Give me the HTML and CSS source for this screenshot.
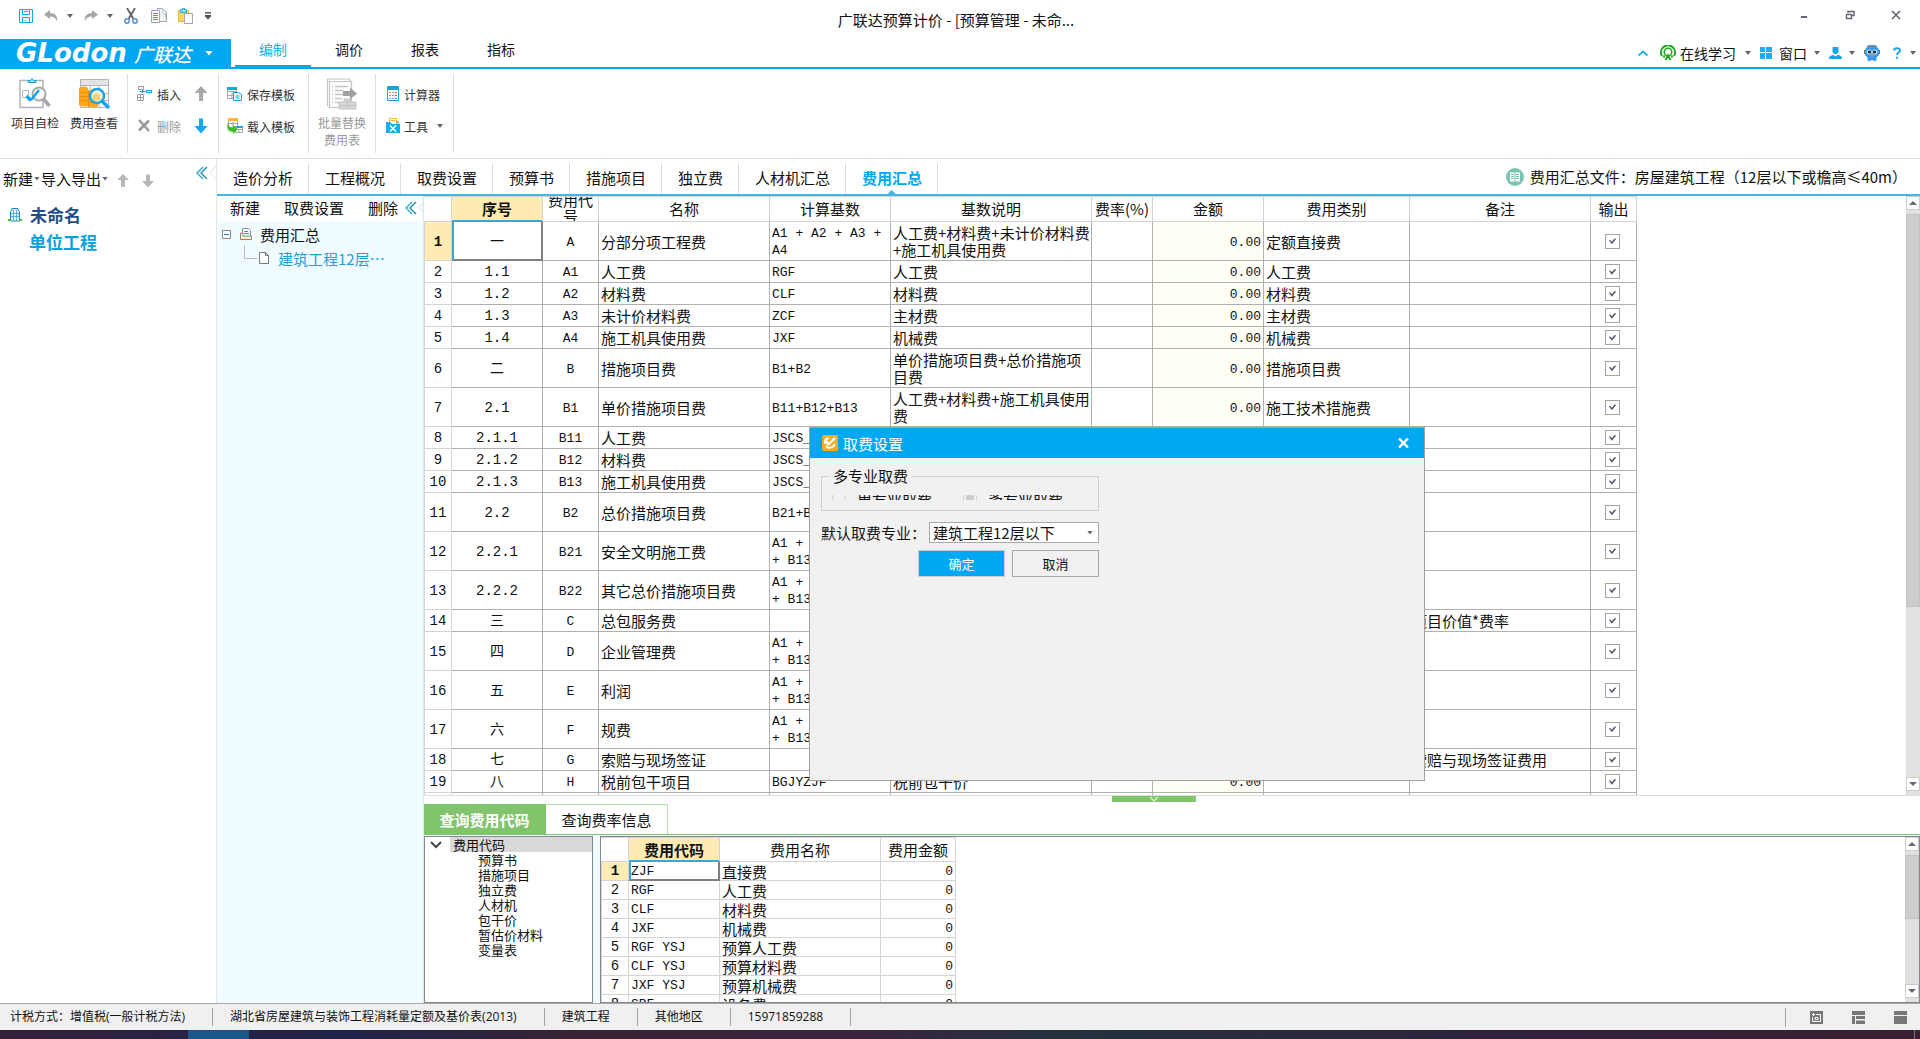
FILE: index.html
```html
<!DOCTYPE html>
<html lang="zh-CN">
<head>
<meta charset="utf-8">
<title>广联达预算计价</title>
<link rel="stylesheet" href="styles.css">
</head>
<body>
<header class="titlebar">
  <div class="quick">
    <button class="ico" aria-label="保存"><svg width="14" height="14" viewBox="0 0 14 14" fill="none" stroke="#10a8e8"><path d="M.5.5h13v13H.5z"/><path d="M3.500.5v5h7v-5M5 2.500h4M3.500 13.500v-5h7v5"/><path d="M6 11.500h1" stroke="#888"/></svg></button>
    <button class="ico undo" aria-label="撤销"><svg width="14" height="12" viewBox="0 0 14 12"><path d="M0 4.500 6 0v3c5 0 8 3 7 8.500C12 8 10 6.500 6 6.500V9z" fill="#a6a6a6"/></svg><i class="caret"></i></button>
    <button class="ico redo" aria-label="恢复"><svg width="14" height="12" viewBox="0 0 14 12"><path d="M14 4.500 8 0v3C3 3 0 6 1 11.500 2 8 4 6.500 8 6.500V9z" fill="#a6a6a6"/></svg><i class="caret"></i></button>
    <button class="ico" aria-label="剪切"><svg width="14" height="16" viewBox="0 0 14 16" fill="none"><path d="M3 0 9.500 11M11 0 4.500 11" stroke="#606060" stroke-width="1.800"/><circle cx="3" cy="13" r="2.200" stroke="#5b8fc8" stroke-width="1.500"/><circle cx="11" cy="13" r="2.200" stroke="#5b8fc8" stroke-width="1.500"/></svg></button>
    <button class="ico copy" aria-label="复制"><svg width="16" height="16" viewBox="0 0 16 16" fill="#fff" stroke="#a6a6a6"><path d="M6.500.5h5l4 4v9h-9z" fill="#f2f2f2"/><path d="M11 1v4h4v6z" fill="#9bdcf8" stroke="none"/><path d="M.5 2.500h8v12h-8z"/><path d="M2 5.500h5M2 7.500h5M2 9.500h5M2 11.500h5" stroke="#1badea"/></svg></button>
    <button class="ico" aria-label="粘贴"><svg width="16" height="16" viewBox="0 0 16 16"><path d="M.5 2.500h10v11H.5z" fill="#ffd45c" stroke="#e8b83a"/><path d="M2.500 1.500h2V0h2v1.500h2v3h-6z" fill="#8fe0fa" stroke="#1badea"/><path d="M6.500 5.500h8v10h-8z" fill="#fff" stroke="#a6a6a6"/></svg></button>
    <button class="ico" aria-label="自定义"><svg width="6" height="8" viewBox="0 0 6 8" fill="#555"><path d="M0 0h6v1.500H0zM0 3h6v1.500L3 7.500 0 4.500z"/></svg></button>
  </div>
  <h1 class="apptitle">广联达预算计价 - [预算管理 - 未命...</h1>
  <div class="winbtns">
    <button class="ico" aria-label="最小化"><svg width="10" height="10" viewBox="0 0 10 10"><path d="M2 6h6v2H2z" fill="#667"/></svg></button>
    <button class="ico" aria-label="还原"><svg width="10" height="10" viewBox="0 0 10 10" fill="none" stroke="#667"><path d="M3 3V1.500h6v4H7M1.500 4.500h5v4h-5z" stroke-width="1.400"/></svg></button>
    <button class="ico" aria-label="关闭"><svg width="10" height="10" viewBox="0 0 10 10"><path d="m1 1 8 8M9 1 1 9" stroke="#667" stroke-width="1.600"/></svg></button>
  </div>
</header>

<nav class="menubar">
  <button class="logo"><b>GLodon</b><span>广联达</span><i class="caret light"></i></button>
  <div class="menus"><a class="menu on" href="#">编制</a><a class="menu" href="#">调价</a><a class="menu" href="#">报表</a><a class="menu" href="#">指标</a></div>
  <div class="tools">
    <button class="ico up" aria-label="收起"><svg width="10" height="6" viewBox="0 0 10 6"><path d="m.5 5.500 4.500-4 4.500 4" fill="none" stroke="#1badea" stroke-width="1.800"/></svg></button>
    <button class="ico learn"><svg width="16" height="16" viewBox="0 0 16 16" fill="none" stroke="#1ea81e"><path d="M2 11A7 7 0 1 1 14 11" stroke-width="2"/><circle cx="8" cy="7" r="3.800" stroke-width="1.500"/><path d="M3 11.500h2M11 11.500h2M5.500 15 8 10.500 10.500 15" stroke-width="2"/></svg>在线学习<i class="caret"></i></button>
    <button class="ico wins"><svg width="12" height="12" viewBox="0 0 12 12" fill="#1badf2"><path d="M0 0h5v5H0zM6 0h6v5H6zM0 6h5v6H0zM6 6h6v6H6z"/></svg>窗口<i class="caret"></i></button>
    <button class="ico" aria-label="用户"><svg width="13" height="12" viewBox="0 0 13 12" fill="#10a5ee"><path d="M3.500 0h6v5L8 7H5L3.500 5zM0 12c0-3 2-4 4.500-4L6.500 9.500 8.500 8c2.500 0 4.500 1 4.500 4z"/></svg><i class="caret"></i></button>
    <button class="ico" aria-label="助手"><svg width="16" height="16" viewBox="0 0 16 16"><path d="M1 5C3-1 13-1 15 5v5l-2 2-1 4h-2l-2-1-2 1H4l-1-4-2-2z" fill="#3a9bee"/><path d="M3 2c3-2 7-2 10 0" stroke="#888" stroke-width="1.500" fill="none"/><circle cx="5.200" cy="7" r="2.600" fill="#b9dcf8"/><circle cx="10.800" cy="7" r="2.600" fill="#b9dcf8"/><circle cx="5.500" cy="7" r="1.500" fill="#222"/><circle cx="10.500" cy="7" r="1.500" fill="#222"/><path d="M7 9.500h2L8 12z" fill="#f5a623"/><path d="M.5 5v4M15.500 5v4" stroke="#777"/></svg></button>
    <button class="ico help" aria-label="帮助"><svg width="8" height="12" viewBox="0 0 8 12"><path d="M1 3.500C1 .5 7 .5 7 3.300 7 5.500 4 5.500 4 8M4 9.800v2" fill="none" stroke="#10a5ee" stroke-width="1.900"/></svg><i class="caret"></i></button>
  </div>
</nav>

<section class="ribbon">
  <div class="group big">
    <button class="bigbtn"><svg width="32" height="32" viewBox="0 0 32 32" fill="none"><path d="M1 2.500h23v27H1z" fill="#fff" stroke="#b4b4b4" stroke-width="1.500"/><path d="M9 4.500V2.500h2.500L13 .5l1.500 2H17v2z" fill="#8fe0fa" stroke="#12a5dc"/><path d="M3.500 12.500h6v7h-6z" stroke="#b4b4b4"/><circle cx="20" cy="16" r="6.500" fill="#f8fbfd" stroke="#a8a8a8" stroke-width="2"/><path d="m24.500 21 6 7" stroke="#a8a8a8" stroke-width="3.500"/><path d="m7.500 18 4.500 4.500" stroke="#12a5ee" stroke-width="3.500"/><path d="M12 22 20 12" stroke="#12a5ee" stroke-width="2.500"/></svg>项目自检</button>
    <button class="bigbtn"><svg width="32" height="32" viewBox="0 0 32 32" fill="none"><path d="M2.500 1.500h28v28h-28z" fill="#fff" stroke="#b4b4b4"/><path d="M3 2h27v5H3z" fill="#e4e4e4"/><path d="M3 7.500h27M3 15.500h27M3 22.500h27M12 8v21M21 8v21" stroke="#b4b4b4"/><path d="M1 10c2-2 7-2 9 0v3c2-1 8-1 10 1v14c-2 2-7 2-9 0-2 1-8 1-10-1z" fill="#ffa71c"/><path d="M1 14c2 1 7 1 9 0M1 18c2 1 7 1 9 0M1 22c2 1 7 1 9 0M11 19c2 1 7 1 9 0M11 24c2 1 7 1 9 0M10.500 12v17" stroke="#e89000"/><circle cx="19" cy="18" r="7" fill="#fff3d0" stroke="#12a5ee" stroke-width="2.500"/><path d="M15 17c2-2 6-2 7 0v5c-2 1-5 1-7 0z" fill="#ffcf78"/><path d="m24 23 7 7" stroke="#12a5ee" stroke-width="3.500"/></svg>费用查看</button>
  </div>
  <div class="group ins">
    <button class="small"><svg width="16" height="16" viewBox="0 0 16 16" fill="none" stroke="#9a9a9a"><path d="M1.500.5h5v3h-5zM.5 8.500h6v6h-6zM3.500 8.500v6M.5 11.500h6"/><path d="M2.500 5.500h6M5.500 4v3M9.500 4.500h5v2h-5z" stroke="#12a5dc" stroke-width="1.200"/></svg>插入</button>
    <button class="ico" aria-label="上移"><svg width="14" height="16" viewBox="0 0 14 16"><path d="M7 0 .5 7H5v8h4V7h4.500z" fill="#a8a8a8"/></svg></button>
    <button class="small off"><svg width="16" height="16" viewBox="0 0 16 16"><path d="m2 2 10 11M12 2.500 2 12.500" stroke="#999" stroke-width="2.600"/></svg>删除</button>
    <button class="ico" aria-label="下移"><svg width="14" height="16" viewBox="0 0 14 16"><path d="M7 15.500.5 8H5V.5h4V8h4.500z" fill="#12a9f2"/></svg></button>
  </div>
  <div class="group tpl">
    <button class="small"><svg width="16" height="16" viewBox="0 0 16 16" fill="#fff"><path d="M.5 1.500h9v11h-9zM.5 5.500h9M.5 9.500h9M5 5v7" stroke="#b0a8a0"/><path d="M0 1h10v3H0z" fill="#16a6d8"/><path d="M6.500 6.500h5l3 2v6h-8z" stroke="#12a5dc"/><path d="M8.500 10h4M8.500 12h4" stroke="#12a5dc"/></svg>保存模板</button>
    <button class="small"><svg width="16" height="16" viewBox="0 0 16 16" fill="#fff"><path d="M1.500 1.500h9v8h-9zM1.500 5.500h9M6 4v5M8.500 8.500h7v6h-7zM8.500 11.500h7M12 11v3" stroke="#a8a8a8"/><path d="M1 0h10v3H1z" fill="#ffb62e"/><path d="M9 8h7v2H9z" fill="#16a6d8"/><path d="M1 5c-2 5 0 9 5 9v2l5-5-5-4v3C3 10 2 8 1 5z" fill="#3fbf2a"/></svg>载入模板</button>
  </div>
  <div class="group rep">
    <button class="bigbtn off"><svg width="32" height="32" viewBox="0 0 32 32" fill="none" stroke="#c4c4c4"><path d="M1.500 28V1H24v2M3.500 3.500h22v26h-22z" stroke-width="1.200"/><path d="M6 8.500h1M6 12.500h1M6 16.500h1M6 20.500h1M6 24.500h1M9 8.500h13M9 12.500h8M9 16.500h8M9 20.500h7M9 24.500h4" stroke-width="1.300"/><path d="M17 13h7V9.500l7 6-7 6V18h-7z" fill="#a0a0a0" stroke="none"/><path d="M18 21h7v3h5v7H13v-7h5z" fill="#d4d4d4"/><path d="M13 27.500h17M21.500 24v7M18 23.500h7"/></svg>批量替换<br>费用表</button>
  </div>
  <div class="group calc">
    <button class="small"><svg width="14" height="16" viewBox="0 0 14 16" fill="none"><path d="M1.500.5h11v14h-11z" fill="#fff" stroke="#12a5dc"/><path d="M2 1h10v3H2z" fill="#16a6d8"/><path d="M3 6.500h2M6 6.500h2M3 9.500h2M6 9.500h2M3 12.500h2M6 12.500h2" stroke="#999"/><path d="M9 6.500h2M9 9.500h2" stroke="#e2564c"/><path d="M9 12.500h2" stroke="#12a5dc"/></svg>计算器</button>
    <button class="small"><svg width="14" height="16" viewBox="0 0 14 16"><path d="M3.500.5h7v7h-7z" fill="#fff" stroke="#ffb62e"/><path d="M11 3h2v4h-2z" fill="#bbb"/><path d="M4.500 2.500h5" stroke="#ffb62e"/><path d="M0 4h4l2 2h8v9H0z" fill="#1badea"/><path d="m4 7.500 6 6M10 7.500l-6 6" stroke="#fff" stroke-width="1.500"/></svg>工具<i class="caret"></i></button>
  </div>
</section>

<main class="work">
  <aside class="project">
    <div class="ptools">
      <button class="txt">新建</button><i class="caret"></i><button class="txt">导入导出</button><i class="caret"></i>
      <svg class="pa" width="12" height="14" viewBox="0 0 12 14"><path d="M6 0 0 6h4v7h4V6h4z" fill="#b8b8b8"/></svg>
      <svg class="pa" width="12" height="14" viewBox="0 0 12 14"><path d="M6 13.500 0 7h4V.5h4V7h4z" fill="#b8b8b8"/></svg>
      <button class="ico fold" aria-label="折叠"><svg width="20" height="16" viewBox="0 0 20 16" fill="none"><path d="M7 2 1 8l6 6" stroke="#2aa5cc" stroke-width="1.300"/><path d="M11 2 5 8l6 6" stroke="#1588a8" stroke-width="1.300"/><path d="M20 2 13.500 7.500 20 14" stroke="#ddd"/></svg></button>
    </div>
    <a class="proj root" href="#"><svg width="14" height="14" viewBox="0 0 14 14"><path d="M2.500 13V3.500L4 2V.5h6V2l1.500 1.500V13z" fill="#dff3fc" stroke="#1c86c0"/><path d="M5.500 2v11M8.500 2v11M3 5.500h8M3 8.500h8" stroke="#5ab4e0"/><path d="M0 11h3v2H0zM11 11h3v2h-3z" fill="#4cb848"/></svg>未命名</a>
    <a class="proj unit" href="#">单位工程</a>
  </aside>

  <section class="desk">
    <nav class="tabs">
      <a href="#">造价分析</a><a href="#">工程概况</a><a href="#">取费设置</a><a href="#">预算书</a><a href="#">措施项目</a><a href="#">独立费</a><a href="#">人材机汇总</a><a href="#" class="on">费用汇总</a>
      <p class="file"><svg width="18" height="18" viewBox="0 0 18 18"><circle cx="9" cy="9" r="9" fill="#7cc4b4"/><path d="M4 4.500h4.500v9H4zM9.500 4.500H14v9H9.500z" fill="#fff"/><path d="M5 6.500h3M5 8.500h3M5 10.500h3M10 6.500h3M10 8.500h3M10 10.500h3" stroke="#7cc4b4"/></svg>费用汇总文件：房屋建筑工程（12层以下或檐高≤40m）</p>
    </nav>
    <div class="cols">
      <aside class="tree">
        <div class="ttools"><button class="txt">新建</button><button class="txt">取费设置</button><button class="txt">删除</button>
          <button class="ico" aria-label="折叠"><svg width="20" height="16" viewBox="0 0 20 16" fill="none"><path d="M7 2 1 8l6 6" stroke="#2aa5cc" stroke-width="1.300"/><path d="M11 2 5 8l6 6" stroke="#1588a8" stroke-width="1.300"/><path d="M20 2 13.500 7.500 20 14" stroke="#ddd"/></svg></button></div>
        <div class="node"><svg width="9" height="9" viewBox="0 0 9 9"><path d="M.5.5h8v8h-8z" fill="#fff" stroke="#888"/><path d="M2 4.500h5" stroke="#2a7fb0"/></svg><svg width="12" height="12" viewBox="0 0 12 12"><path d="M2.500.5h6l2 2v7h-8z" fill="#fff" stroke="#888"/><path d="M4 3.500h4M4 5.500h5" stroke="#12a5dc"/><path d="M.5 5v6.500h11V8H3V5z" fill="#fff0bf" stroke="#888"/></svg>费用汇总</div>
        <a class="node leaf" href="#"><svg width="26" height="26" viewBox="0 0 26 26" fill="none"><path d="M.5 0v13.500H13" stroke="#bbb"/><path d="M15.500 7.500h6l3 3v8h-9z" fill="#fff" stroke="#777"/><path d="M21.500 7.500v3h3" stroke="#777"/></svg>建筑工程12层⋯</a>
      </aside>
      <div class="right">
        <div class="sheet">
          <div class="pane">
          <table class="grid main">
            <colgroup><col class="c0"><col class="c1"><col class="c2"><col class="c3"><col class="c4"><col class="c5"><col class="c6"><col class="c7"><col class="c8"><col class="c9"><col class="c10"></colgroup>
            <thead><tr><th></th><th class="cur">序号</th><th><div class="clip">费用代号</div></th><th>名称</th><th>计算基数</th><th>基数说明</th><th>费率(%)</th><th>金额</th><th>费用类别</th><th>备注</th><th>输出</th></tr></thead>
            <tbody>
            <tr class="t cur"><th>1</th><td class="sel">一</td><td>A</td><td>分部分项工程费</td><td>A1 + A2 + A3 + A4</td><td>人工费+材料费+未计价材料费+施工机具使用费</td><td></td><td>0.00</td><td>定额直接费</td><td></td><td><input type="checkbox" checked aria-label="输出 1"></td></tr>
            <tr><th>2</th><td>1.1</td><td>A1</td><td>人工费</td><td>RGF</td><td>人工费</td><td></td><td>0.00</td><td>人工费</td><td></td><td><input type="checkbox" checked aria-label="输出 2"></td></tr>
            <tr><th>3</th><td>1.2</td><td>A2</td><td>材料费</td><td>CLF</td><td>材料费</td><td></td><td>0.00</td><td>材料费</td><td></td><td><input type="checkbox" checked aria-label="输出 3"></td></tr>
            <tr><th>4</th><td>1.3</td><td>A3</td><td>未计价材料费</td><td>ZCF</td><td>主材费</td><td></td><td>0.00</td><td>主材费</td><td></td><td><input type="checkbox" checked aria-label="输出 4"></td></tr>
            <tr><th>5</th><td>1.4</td><td>A4</td><td>施工机具使用费</td><td>JXF</td><td>机械费</td><td></td><td>0.00</td><td>机械费</td><td></td><td><input type="checkbox" checked aria-label="输出 5"></td></tr>
            <tr class="t"><th>6</th><td>二</td><td>B</td><td>措施项目费</td><td>B1+B2</td><td>单价措施项目费+总价措施项目费</td><td></td><td>0.00</td><td>措施项目费</td><td></td><td><input type="checkbox" checked aria-label="输出 6"></td></tr>
            <tr class="t"><th>7</th><td>2.1</td><td>B1</td><td>单价措施项目费</td><td>B11+B12+B13</td><td>人工费+材料费+施工机具使用费</td><td></td><td>0.00</td><td>施工技术措施费</td><td></td><td><input type="checkbox" checked aria-label="输出 7"></td></tr>
            <tr><th>8</th><td>2.1.1</td><td>B11</td><td>人工费</td><td>JSCS_RGF</td><td></td><td></td><td></td><td></td><td></td><td><input type="checkbox" checked aria-label="输出 8"></td></tr>
            <tr><th>9</th><td>2.1.2</td><td>B12</td><td>材料费</td><td>JSCS_CLF</td><td></td><td></td><td></td><td></td><td></td><td><input type="checkbox" checked aria-label="输出 9"></td></tr>
            <tr><th>10</th><td>2.1.3</td><td>B13</td><td>施工机具使用费</td><td>JSCS_JXF</td><td></td><td></td><td></td><td></td><td></td><td><input type="checkbox" checked aria-label="输出 10"></td></tr>
            <tr class="t"><th>11</th><td>2.2</td><td>B2</td><td>总价措施项目费</td><td>B21+B22</td><td></td><td></td><td></td><td></td><td></td><td><input type="checkbox" checked aria-label="输出 11"></td></tr>
            <tr class="t"><th>12</th><td>2.2.1</td><td>B21</td><td>安全文明施工费</td><td>A1 + A4 + B11<br>+ B13</td><td></td><td></td><td></td><td></td><td></td><td><input type="checkbox" checked aria-label="输出 12"></td></tr>
            <tr class="t"><th>13</th><td>2.2.2</td><td>B22</td><td>其它总价措施项目费</td><td>A1 + A4 + B11<br>+ B13</td><td></td><td></td><td></td><td></td><td></td><td><input type="checkbox" checked aria-label="输出 13"></td></tr>
            <tr><th>14</th><td>三</td><td>C</td><td>总包服务费</td><td></td><td></td><td></td><td></td><td></td><td>项目价值*费率</td><td><input type="checkbox" checked aria-label="输出 14"></td></tr>
            <tr class="t"><th>15</th><td>四</td><td>D</td><td>企业管理费</td><td>A1 + A4 + B11<br>+ B13</td><td></td><td></td><td></td><td></td><td></td><td><input type="checkbox" checked aria-label="输出 15"></td></tr>
            <tr class="t"><th>16</th><td>五</td><td>E</td><td>利润</td><td>A1 + A4 + B11<br>+ B13</td><td></td><td></td><td></td><td></td><td></td><td><input type="checkbox" checked aria-label="输出 16"></td></tr>
            <tr class="t"><th>17</th><td>六</td><td>F</td><td>规费</td><td>A1 + A4 + B11<br>+ B13</td><td></td><td></td><td></td><td></td><td></td><td><input type="checkbox" checked aria-label="输出 17"></td></tr>
            <tr><th>18</th><td>七</td><td>G</td><td>索赔与现场签证</td><td></td><td></td><td></td><td></td><td></td><td>索赔与现场签证费用</td><td><input type="checkbox" checked aria-label="输出 18"></td></tr>
            <tr><th>19</th><td>八</td><td>H</td><td>税前包干项目</td><td>BGJYZJF</td><td>税前包干价</td><td></td><td>0.00</td><td></td><td></td><td><input type="checkbox" checked aria-label="输出 19"></td></tr>
            <tr><th></th><td></td><td></td><td></td><td></td><td></td><td></td><td></td><td></td><td></td><td></td></tr>
            </tbody>
          </table>
          </div>
          <div class="scroll"><i class="up"></i><b class="long"></b><i class="down"></i></div>
        </div>
        <div class="split"><button class="handle" aria-label="收起下方面板"><svg width="10" height="6" viewBox="0 0 10 6"><path d="m1 1 4 4 4-4" fill="none" stroke="#d8f0cc" stroke-width="1.500"/></svg></button></div>
        <nav class="subtabs"><a href="#" class="on">查询费用代码</a><a href="#">查询费率信息</a></nav>
        <div class="query">
          <ul class="codes">
            <li class="top"><svg width="12" height="8" viewBox="0 0 12 8"><path d="m1 1 5 5 5-5" fill="none" stroke="#444" stroke-width="2"/></svg><span>费用代码</span></li>
            <li>预算书</li><li>措施项目</li><li>独立费</li><li>人材机</li><li>包干价</li><li>暂估价材料</li><li>变量表</li>
          </ul>
          <div class="result">
            <div class="pane">
            <table class="grid sub">
              <colgroup><col class="d0"><col class="d1"><col class="d2"><col class="d3"></colgroup>
              <thead><tr><th></th><th class="cur">费用代码</th><th>费用名称</th><th>费用金额</th></tr></thead>
              <tbody>
              <tr class="cur"><th>1</th><td class="sel">ZJF</td><td>直接费</td><td>0</td></tr>
              <tr><th>2</th><td>RGF</td><td>人工费</td><td>0</td></tr>
              <tr><th>3</th><td>CLF</td><td>材料费</td><td>0</td></tr>
              <tr><th>4</th><td>JXF</td><td>机械费</td><td>0</td></tr>
              <tr><th>5</th><td>RGF YSJ</td><td>预算人工费</td><td>0</td></tr>
              <tr><th>6</th><td>CLF YSJ</td><td>预算材料费</td><td>0</td></tr>
              <tr><th>7</th><td>JXF YSJ</td><td>预算机械费</td><td>0</td></tr>
              <tr><th>8</th><td>SBF</td><td>设备费</td><td>0</td></tr>
              </tbody>
            </table>
            </div>
            <div class="scroll"><i class="up"></i><b class="short"></b><i class="down"></i></div>
          </div>
        </div>
      </div>
    </div>
  </section>
</main>

<footer class="status">
  <span>计税方式：增值税(一般计税方法)</span><span>湖北省房屋建筑与装饰工程消耗量定额及基价表(2013)</span><span>建筑工程</span><span>其他地区</span><span>15971859288</span>
  <div class="views">
    <button class="ico" aria-label="适应"><svg width="13" height="13" viewBox="0 0 13 13"><path d="M0 0h13v13H0z" fill="#777"/><path d="M2 3.500h3M3.500 2v3M6 3.500h4.500v7h-8V6M5 6.500h3v2H5z" fill="none" stroke="#fff"/></svg></button>
    <button class="ico" aria-label="列表"><svg width="13" height="13" viewBox="0 0 13 13" fill="#777"><path d="M0 0h13v4H0zM0 5h3v8H0zM4 5h9v3H4zM4 9.500h9V13H4z"/></svg></button>
    <button class="ico" aria-label="窗格"><svg width="13" height="13" viewBox="0 0 13 13" fill="#777"><path d="M0 0h13v4H0zM0 5h13v8H0z"/></svg></button>
  </div>
</footer>
<div class="taskbar"><i class="running"></i><i class="edge"></i></div>

<div class="dialog" role="dialog" aria-labelledby="dlg">
  <header class="dhead"><svg width="16" height="16" viewBox="0 0 16 16"><rect width="16" height="16" rx="2" fill="#f9ac1b"/><path d="M7 3.500C3 3 2 7 4 9M4 11c2 3 7 2 9-2" stroke="#fff" stroke-width="2" fill="none"/><path d="m6 10 7-7M4 6l3 4" stroke="#fff" stroke-width="2.400"/></svg><h2 id="dlg">取费设置</h2><button class="ico" aria-label="关闭"><svg width="11" height="10" viewBox="0 0 11 10"><path d="m1 .5 9 9M10 .5l-9 9" stroke="#fff" stroke-width="2.400"/></svg></button></header>
  <form class="dbody">
    <fieldset><legend>多专业取费</legend>
      <div class="radios"><label><input type="radio" name="m" disabled>单专业取费</label><label><input type="radio" name="m" checked disabled>多专业取费</label></div>
    </fieldset>
    <div class="line"><label for="major">默认取费专业：</label><div class="pick"><select id="major"><option>建筑工程12层以下</option></select><i class="caret"></i></div></div>
    <div class="acts"><button type="button" class="ok">确定</button><button type="button">取消</button></div>
  </form>
</div>
</body>
</html>
```
FILE: styles.css
```css
* { box-sizing: border-box; }
body {
  margin: 0; height: 100vh; display: flex; flex-direction: column; overflow: hidden; position: relative;
  background: #fff; color: #111; font: 15px/17px "Noto Sans CJK SC", sans-serif;
}
button { border: 0; padding: 0; background: none; font: inherit; color: inherit; }
a { color: inherit; text-decoration: none; }
h1, h2, p, ul { margin: 0; padding: 0; font-size: 15px; font-weight: 400; list-style: none; }
svg { display: block; flex: none; }
.ico { display: flex; align-items: center; gap: 9px; }
.caret { flex: none; width: 6px; height: 4px; background: #666; clip-path: polygon(0 0, 100% 0, 50% 100%); }
.caret.light { width: 8px; height: 5px; background: #fff; }

.titlebar { height: 39px; flex: none; display: grid; grid-template-columns: 1fr auto 1fr; align-items: center; padding: 0 19px; }
.quick { display: flex; align-items: center; gap: 11px; height: 32px; align-self: start; }
.quick .copy { margin-left: 2px; }
.apptitle { padding-right: 8px; }
.winbtns { display: flex; justify-content: flex-end; gap: 36px; align-self: start; padding-top: 10px; }

.menubar { height: 30px; flex: none; display: flex; border-bottom: 2px solid #00a8f0; }
.logo { width: 231px; background: #00a8f3; color: #fff; display: flex; align-items: center; padding-left: 16px; }
.logo b { font: italic 700 26px/28px "DejaVu Sans", sans-serif; width: 118px; text-align: left; }
.logo span { font-size: 19px; font-style: italic; font-weight: 500; width: 71px; text-align: left; }
.menus { display: flex; padding-left: 4px; font-size: 14px; height: 30px; }
.menu { width: 76px; text-align: center; line-height: 20px; border-bottom: 4px solid transparent; }
.menu.on { color: #1badf2; border-bottom-color: #00a8f0; }
.tools { margin-left: auto; display: flex; align-items: center; gap: 9px; padding-right: 4px; font-size: 14px; }
.tools .ico { gap: 7px; }
.tools .up { margin-right: 3px; }
.tools .learn { gap: 4px; }
.tools .learn .caret { margin-left: 5px; }
.tools .help { gap: 9px; margin-left: 4px; }

.ribbon { height: 90px; flex: none; display: flex; padding: 5px 0; border-bottom: 1px solid #ddd; font-size: 12px; color: #333; }
.group { border-right: 1px solid #ddd; height: 79px; display: flex; }
.big { width: 128px; padding: 4px 0 0 11px; gap: 11px; }
.bigbtn { width: 48px; align-self: flex-start; white-space: nowrap; }
.bigbtn svg { margin: 0 auto 4px; }
.off { color: #999; }
.small { display: flex; align-items: center; gap: 4px; }
.ins { width: 91px; display: grid; grid-template-columns: 44px 14px; column-gap: 13px; padding-left: 9px; }
.ins, .tpl, .calc { padding-top: 4px; padding-bottom: 11px; grid-template-rows: 1fr 1fr; }
.tpl { width: 90px; display: grid; padding-left: 8px; }
.rep { width: 67px; padding: 4px 0 0 9px; }
.calc { width: 78px; display: grid; padding-left: 10px; }
.calc .caret { margin-left: 5px; }

.work { flex: 1; min-height: 0; display: grid; grid-template-columns: 217px 1fr; }
.project { border-right: 1px solid #e4e4e4; }
.ptools { height: 37px; display: flex; align-items: center; padding: 2px 0 0 3px; white-space: nowrap; }
.ptools .pa { margin: 4px 0 0 8px; }
.ptools .pa + .pa { margin-left: 13px; }
.ptools .caret { margin: 0 1px; }
.ptools .fold { margin: -12px 0 0 auto; }
.proj { display: flex; align-items: center; height: 27px; font-size: 17px; font-weight: 700; }
.proj.root { margin-top: 5px; padding-left: 8px; gap: 8px; color: #1f4f8a; }
.proj.unit { padding-left: 29px; color: #0aa2dc; }

.desk { display: flex; flex-direction: column; min-width: 0; min-height: 0; }
.tabs { height: 37px; flex: none; display: flex; border-bottom: 2px solid #45b5e4; }
.tabs a { padding: 0 15px 0 16px; margin-top: 4px; line-height: 30px; border-right: 1px solid #ddd; position: relative; }
.tabs .on { color: #00a8f0; font-weight: 700; }
.tabs .on::after { content: ""; position: absolute; left: 50%; bottom: 0; width: 8px; height: 4px; margin-left: -4px; background: #45b5e4; clip-path: polygon(50% 0, 100% 100%, 0 100%); }
.file { margin-left: auto; display: flex; align-items: center; gap: 6px; padding-right: 13px; }
.cols { flex: 1; min-height: 0; display: grid; grid-template-columns: 207px 1fr; }
.tree { background: #f0fcff; border-right: 1px solid #e0e6e8; }
.ttools { display: flex; align-items: center; height: 25px; background: #fff; padding: 0 0 2px 13px; gap: 24px; margin-right: 2px; white-space: nowrap; }
.ttools .ico { margin-left: -17px; }
.node { display: flex; align-items: center; height: 26px; padding-left: 5px; gap: 8px; }
.node svg + svg { margin-left: 1px; }
.leaf { color: #1ba3d4; padding-left: 27px; height: 22px; }

.right { display: flex; flex-direction: column; min-width: 0; min-height: 0; }
.sheet { flex: 1; min-height: 0; display: flex; border-bottom: 1px solid #ddd; }
.pane { flex: 1; min-width: 0; overflow: hidden; }
.scroll { width: 14px; background: #e1e1e1; display: flex; flex-direction: column; padding: 0 0 4px; }
.scroll i { height: 14px; flex: none; background: #fff; border: 1px solid #ccc; display: grid; place-items: center; }
.scroll i::before { content: ""; width: 8px; height: 4px; background: #667; clip-path: polygon(50% 0, 100% 100%, 0 100%); }
.scroll .down { margin-top: auto; }
.scroll .down::before { clip-path: polygon(0 0, 100% 0, 50% 100%); }
.scroll b { background: #cdcdcd; border: 1px solid #c4c4c4; margin-top: 4px; }
.long { height: 66%; }
.short { height: 40%; }

.grid { table-layout: fixed; border-collapse: separate; border-spacing: 0; }
.grid td, .grid th { padding: 0 0 0 2px; border-right: 1px solid #b0b0b0; border-bottom: 1px solid #b0b0b0; height: 22px; text-align: left; font-weight: 400; }
.grid th { text-align: center; border-color: #d4d4d4; padding: 0; }
.grid thead th { height: 26px; border-top: 1px solid #d4d4d4; padding: 0 0 2px; }
.grid tbody th { border-left: 1px solid #d4d4d4; font: 14px/17px "Liberation Mono", monospace; padding-top: 2px; }
.grid .cur > th, .grid th.cur { background: #ffebb3; font-weight: 700; }
.grid thead .cur { box-shadow: inset 0 -1px #3ca5d5; border-bottom-color: #3ca5d5; }
.grid td.sel { border-color: #808080; box-shadow: inset 2px 0 #3ca5d5, inset -1px -1px #808080; }
.main { width: 1212px; }
.main .t td, .main .t th { height: 39px; }
.main td:nth-child(2), .main td:nth-child(3) { text-align: center; padding-left: 0; }
.main td:nth-child(2) { font-family: "Liberation Mono", "Noto Sans CJK SC", monospace; font-size: 14px; padding-top: 2px; }
.main td:nth-child(8) { text-align: right; background: #fffff5; padding: 2px 2px 0 0; }
.main td:last-child { text-align: center; padding: 0 2px 2px 0; line-height: 15px; }
.main td:nth-child(3), .main td:nth-child(5), .main td:nth-child(8) { font-family: "Liberation Mono", monospace; font-size: 13px; padding-top: 2px; }
.clip { height: 24px; overflow: hidden; display: grid; align-content: center; line-height: 16px; padding: 0 5px 2px; }
.grid thead th:nth-child(3) { padding: 0; }
.c0 { width: 28px; } .c1 { width: 91px; } .c2 { width: 56px; } .c3 { width: 171px; } .c4 { width: 121px; } .c5 { width: 201px; }
.c6 { width: 61px; } .c7 { width: 111px; } .c8 { width: 146px; } .c9 { width: 181px; } .c10 { width: 46px; }
input[type="checkbox"] { appearance: none; width: 15px; height: 15px; margin: 0; border: 1px solid #a4a4a4; display: inline-grid; place-items: center; vertical-align: middle; }
input[type="checkbox"]:checked::before { content: ""; width: 7px; height: 6px; background: #556; clip-path: polygon(0 40%, 15% 25%, 38% 60%, 85% 0, 100% 18%, 40% 100%); }

.split { height: 8px; flex: none; display: flex; justify-content: center; padding-right: 36px; }
.handle { width: 84px; height: 6px; background: #82c46c; display: flex; justify-content: center; }
.subtabs { height: 31px; flex: none; display: flex; border-bottom: 1px solid #82c46c; }
.subtabs a { width: 122px; text-align: center; line-height: 30px; border: solid #b4dfa4; border-width: 1px 1px 0 0; }
.subtabs .on { background: #82c46c; border-color: #82c46c; color: #fff; font-weight: 700; }
.query { flex: none; height: 168px; display: grid; grid-template-columns: 169px 1fr; gap: 7px; background: #f0fcff; padding-top: 1px; }
.codes { border: 1px solid #828790; background: #fff; font-size: 13px; line-height: 15px; }
.codes li { padding-left: 53px; }
.codes .top { display: flex; align-items: center; padding-left: 5px; gap: 8px; }
.codes span { flex: 1; background: #d9d9d9; padding-left: 3px; }
.result { border: 1px solid #828790; background: #fff; display: flex; min-width: 0; overflow: hidden; }
.sub { width: 355px; }
.sub td, .sub th { border-color: #d4d4d4; height: 19px; }
.sub tbody th { padding-top: 1px; }
.sub thead th { height: 25px; padding: 0 0 1px; }
.sub td:nth-child(2) { font-family: "Liberation Mono", monospace; font-size: 13px; padding-top: 1px; }
.sub td:last-child { text-align: right; padding: 1px 2px 0 0; font-family: "Liberation Mono", monospace; font-size: 13px; }
.d0 { width: 28px; } .d1 { width: 91px; } .d2 { width: 161px; } .d3 { width: 75px; }

.status { height: 27px; flex: none; background: #f0f0f0; border-top: 1px solid #a8a8a8; display: flex; align-items: center; font: 12px/18px "Open Sans", "Noto Sans CJK SC", sans-serif; }
.status span { padding: 0 27px 0 17px; border-right: 1px solid #a0a4ac; white-space: nowrap; }
.status span:first-child { padding-left: 10px; }
.views { margin-left: auto; display: flex; gap: 29px; padding: 3px 13px 3px 24px; border-left: 1px solid #a0a4ac; }
.taskbar { height: 9px; flex: none; background: linear-gradient(90deg, #33203a, #20244a 18%, #372332 30%, #3a2440 45%, #24323c 55%, #30203c 80%, #3a2030); display: flex; padding-left: 188px; }
.running { width: 61px; background: #1b558c; }
.edge { margin-left: auto; margin-right: 5px; width: 1px; background: #777; }

.dialog { position: absolute; left: 809px; top: 427px; width: 616px; height: 354px; background: #f1f1f1; border: 1px solid #a0a0a0; }
.dhead { height: 30px; background: #00a8f3; color: #fff; display: flex; align-items: center; gap: 5px; padding: 0 15px 0 12px; }
.dhead .ico { margin-left: auto; }
.dbody { width: 289px; padding: 9px 0 0 11px; }
fieldset { margin: 0; padding: 0; border: 1px solid #d0d0d0; height: 44px; min-width: 0; }
legend { margin-left: 7px; padding: 0 4px; height: 18px; }
.radios { height: 5px; margin-top: 10px; overflow: hidden; display: flex; align-items: center; padding-left: 10px; }
.radios label { display: flex; align-items: center; gap: 11px; width: 131px; white-space: nowrap; }
.radios input { width: 14px; height: 14px; margin: 0; flex: none; }
.line { display: flex; align-items: center; justify-content: space-between; margin-top: 11px; white-space: nowrap; }
.line label { width: 108px; }
.pick { width: 170px; display: grid; align-items: center; }
.pick > * { grid-area: 1 / 1; }
.pick .caret { justify-self: end; margin-right: 6px; }
select { appearance: none; width: 100%; height: 21px; border: 1px solid #a8a8a8; background: #fff; padding: 0 3px; font: inherit; line-height: 17px; border-radius: 0; color: #111; }
.acts { display: flex; justify-content: flex-end; gap: 7px; margin-top: 7px; }
.acts button { width: 87px; height: 27px; border: 1px solid #a8a8a8; font-size: 13px; }
.acts .ok { background: #00a8f3; color: #fff; border-color: #ccc; }
```
